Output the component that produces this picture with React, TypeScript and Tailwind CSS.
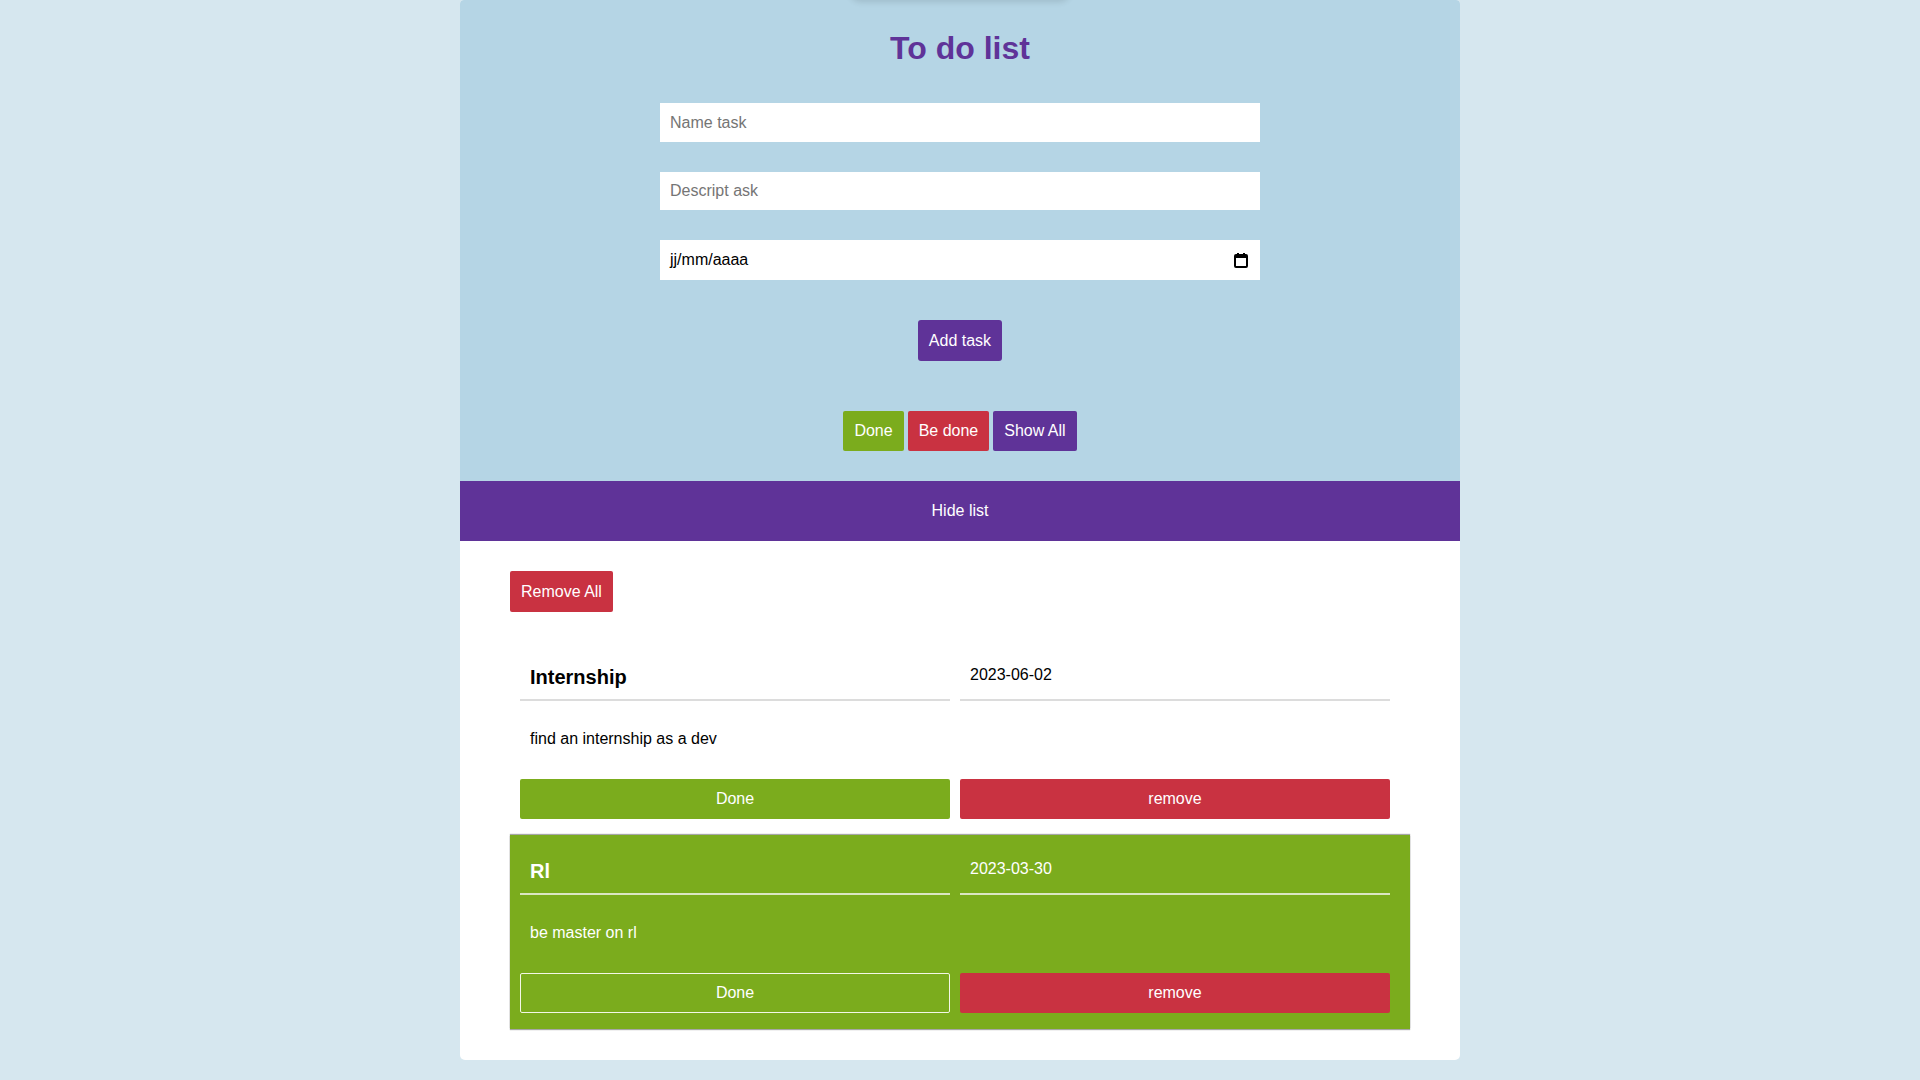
import React from "react";

const font = { fontFamily: '"Liberation Sans", Arial, sans-serif' };

function Task({
  name,
  date,
  desc,
  done,
}: {
  name: string;
  date: string;
  desc: string;
  done?: boolean;
}) {
  return (
    <div
      className={
        done
          ? "bg-[#7bac1d] text-white pt-[10px] pb-[16px] pl-[10px] pr-[20px] shadow-[0_1px_1px_rgba(0,0,0,0.35),0_-1px_1px_rgba(0,0,0,0.35)]"
          : "bg-white text-black pt-[10px] pb-[16px] pl-[10px] pr-[20px]"
      }
    >
      <div className="flex gap-[10px]">
        <div
          className={
            done
              ? "w-[430px] px-[10px] pt-[15px] pb-[10px] border-b-2 border-[#dbe6c4]"
              : "w-[430px] px-[10px] pt-[15px] pb-[10px] border-b-2 border-[#dcdcdc]"
          }
        >
          <h3 className="text-[20px] leading-[23px] font-bold">{name}</h3>
        </div>
        <div
          className={
            done
              ? "w-[430px] px-[10px] pt-[15px] pb-[10px] border-b-2 border-[#dbe6c4]"
              : "w-[430px] px-[10px] pt-[15px] pb-[10px] border-b-2 border-[#dcdcdc]"
          }
        >
          <p className="text-[16px] leading-[18px]">{date}</p>
        </div>
      </div>
      <p className="mt-[29px] pl-[10px] text-[16px] leading-[18px]">{desc}</p>
      <div className="mt-[31px] flex gap-[10px]">
        <button
          className={
            done
              ? "w-[430px] h-[40px] rounded-[2px] border border-[#f3f7e6] bg-[#7bac1d] text-white text-[16px]"
              : "w-[430px] h-[40px] rounded-[2px] bg-[#7bac1d] text-white text-[16px]"
          }
          style={font}
        >
          Done
        </button>
        <button
          className="w-[430px] h-[40px] rounded-[2px] bg-[#c93241] text-white text-[16px]"
          style={font}
        >
          remove
        </button>
      </div>
    </div>
  );
}

export default function App() {
  return (
    <div className="min-h-[1080px] w-full bg-[#d6e7ef] relative overflow-hidden" style={font}>
      <div className="absolute left-[850px] top-[-20px] w-[220px] h-[20px] rounded-full shadow-[0_2px_6px_rgba(0,0,0,0.12)] z-10" />
      <div className="mx-auto w-[1000px] rounded-b-[5px] rounded-t-[4px] overflow-hidden bg-white">
        <div className="bg-[#b5d5e5] flex flex-col items-center pt-[30px] pb-[30px]">
          <h1 className="text-[32px] leading-[37px] font-bold text-[#5f3398]">To do list</h1>
          <input
            className="mt-[36px] w-[600px] h-[39px] bg-white px-[10px] text-[16px] text-black placeholder:text-[#757575] outline-none"
            placeholder="Name task"
            style={font}
          />
          <input
            className="mt-[30px] w-[600px] h-[38px] bg-white px-[10px] text-[16px] text-black placeholder:text-[#757575] outline-none"
            placeholder="Descript ask"
            style={font}
          />
          <div className="mt-[30px] w-[600px] h-[40px] bg-white pl-[10px] pr-[10px] flex items-center justify-between text-[16px] text-black">
            <span>jj/mm/aaaa</span>
            <svg width="14" height="16" viewBox="0 0 14 16" className="mr-[2px]">
              <rect x="1" y="3" width="12" height="12" fill="none" stroke="#000" strokeWidth="2" rx="1" />
              <rect x="1" y="3" width="12" height="3" fill="#000" />
              <rect x="3" y="1" width="2" height="3" fill="#000" />
              <rect x="9" y="1" width="2" height="3" fill="#000" />
            </svg>
          </div>
          <button
            className="mt-[40px] h-[41px] px-[11px] rounded-[3px] bg-[#5f3398] text-white text-[16px]"
            style={font}
          >
            Add task
          </button>
          <div className="mt-[50px] flex gap-[4px]">
            <button className="h-[40px] px-[11px] rounded-[2px] bg-[#7bac1d] text-white text-[16px]" style={font}>
              Done
            </button>
            <button className="h-[40px] px-[11px] rounded-[2px] bg-[#c93241] text-white text-[16px]" style={font}>
              Be done
            </button>
            <button className="h-[40px] px-[11px] rounded-[2px] bg-[#5f3398] text-white text-[16px]" style={font}>
              Show All
            </button>
          </div>
        </div>
        <div className="h-[60px] bg-[#5f3398] flex items-center justify-center text-white text-[16px]">
          Hide list
        </div>
        <div className="px-[50px] pt-[30px] pb-[31px]">
          <button className="h-[41px] px-[11px] rounded-[2px] bg-[#c93241] text-white text-[16px]" style={font}>
            Remove All
          </button>
          <div className="mt-[29px]">
            <Task name="Internship" date="2023-06-02" desc="find an internship as a dev" />
            <Task name="Rl" date="2023-03-30" desc="be master on rl" done />
          </div>
        </div>
      </div>
    </div>
  );
}
